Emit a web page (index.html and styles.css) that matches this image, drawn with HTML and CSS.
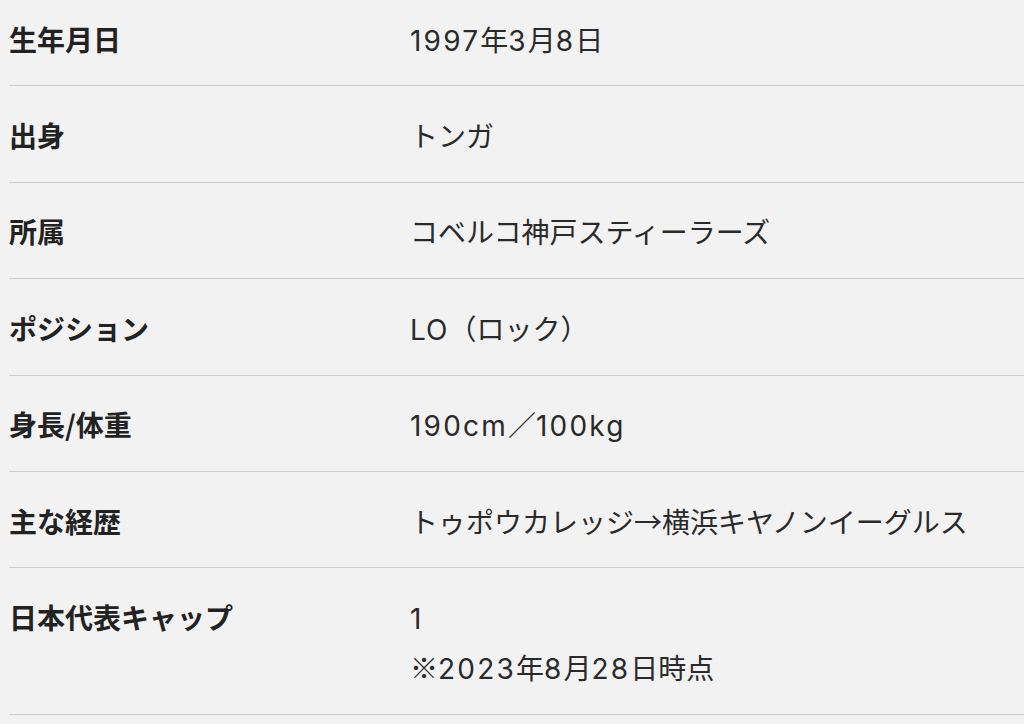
FILE: index.html
```html
<!DOCTYPE html>
<html lang="ja">
<head>
<meta charset="utf-8">
<title>プロフィール</title>
<link rel="stylesheet" href="styles.css">
</head>
<body>
<table class="profile">
  <tbody>
    <tr><th>生年月日</th><td><span class="en">1997</span>年<span class="en">3</span>月<span class="en">8</span>日</td></tr>
    <tr><th>出身</th><td>トンガ</td></tr>
    <tr><th>所属</th><td>コベルコ神戸スティーラーズ</td></tr>
    <tr><th>ポジション</th><td><span class="en en-tight">LO</span>（ロック）</td></tr>
    <tr><th>身長/体重</th><td><span class="en">190cm</span>／<span class="en">100kg</span></td></tr>
    <tr><th>主な経歴</th><td>トゥポウカレッジ→横浜キヤノンイーグルス</td></tr>
    <tr><th>日本代表キャップ</th><td><span class="en">1</span><br>※<span class="en">2023</span>年<span class="en">8</span>月<span class="en">28</span>日時点</td></tr>
  </tbody>
</table>
</body>
</html>
```
FILE: styles.css
```css
html, body {
  margin: 0;
  padding: 0;
  background: #f2f2f2;
}
body {
  padding-left: 9px;
  overflow: hidden;
}
.profile {
  width: calc(100% + 20px);
  margin-top: -10px;
  border-collapse: collapse;
  font-family: "Noto Sans CJK JP", "Noto Sans", sans-serif;
  font-size: 28px;
  line-height: 50px;
  color: #222;
}
.profile th,
.profile td {
  padding: 23.6px 0 21.8px;
  border-bottom: 1px solid #cdcdcd;
  text-align: left;
  vertical-align: top;
}
.profile th {
  width: 401px;
  font-weight: 700;
}
.profile td {
  font-weight: 400;
  color: #2a2a2a;
}
.en {
  font-family: Inter, "Noto Sans", sans-serif;
  letter-spacing: 2.2px;
  line-height: 1;
}
.en-tight {
  letter-spacing: 1px;
}
```
